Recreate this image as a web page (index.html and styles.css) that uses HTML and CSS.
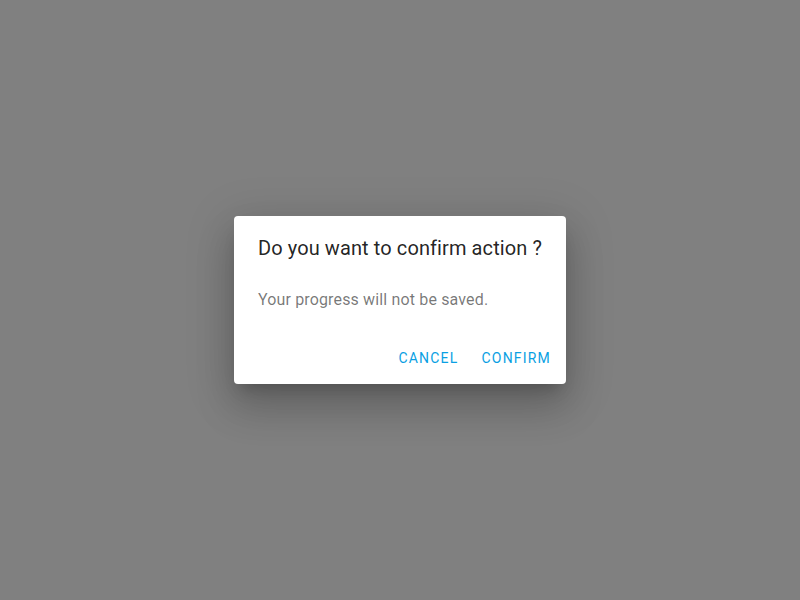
FILE: index.html
```html
<!DOCTYPE html>
<html>
<head>
<meta charset="utf-8">
<link rel="stylesheet" href="styles.css">
</head>
<body>
<div class="backdrop">
  <div class="dialog" role="dialog">
    <h2 class="dialog-title">Do you want to confirm action ?</h2>
    <div class="dialog-content">
      <p class="dialog-text">Your progress will not be saved.</p>
    </div>
    <div class="dialog-actions">
      <button class="btn">Cancel</button>
      <button class="btn">Confirm</button>
    </div>
  </div>
</div>
</body>
</html>
```

FILE: styles.css
```css
html, body {
  margin: 0;
  padding: 0;
  height: 100%;
}
body {
  font-family: Roboto, "Liberation Sans", sans-serif;
  background: #fff;
}
.backdrop {
  height: 100%;
  background: #808080;
  display: flex;
  align-items: center;
  justify-content: center;
}
.dialog {
  background: #fff;
  border-radius: 4px;
  box-shadow: 0 11px 15px -7px rgba(0,0,0,0.2), 0 24px 38px 3px rgba(0,0,0,0.14), 0 9px 46px 8px rgba(0,0,0,0.12);
  display: flex;
  flex-direction: column;
}
.dialog-title {
  margin: 0;
  padding: 16px 24px;
  font-size: 20px;
  font-weight: 400;
  line-height: 32px;
  letter-spacing: 0.1px;
  color: rgba(0,0,0,0.87);
  white-space: nowrap;
}
.dialog-content {
  padding: 8px 24px;
}
.dialog-text {
  margin: 0 0 12px;
  font-size: 16px;
  line-height: 24px;
  letter-spacing: 0.00938em;
  color: rgba(0,0,0,0.54);
}
.dialog-actions {
  padding: 8px;
  display: flex;
  justify-content: flex-end;
  gap: 8px;
}
.btn {
  font-family: inherit;
  font-size: 14px;
  font-weight: 400;
  letter-spacing: 1.2px;
  text-transform: uppercase;
  color: #0a9fe3;
  background: none;
  border: 0;
  padding: 6px 7px 6px 8px;
  height: 36px;
  min-width: 64px;
  cursor: pointer;
}
```
